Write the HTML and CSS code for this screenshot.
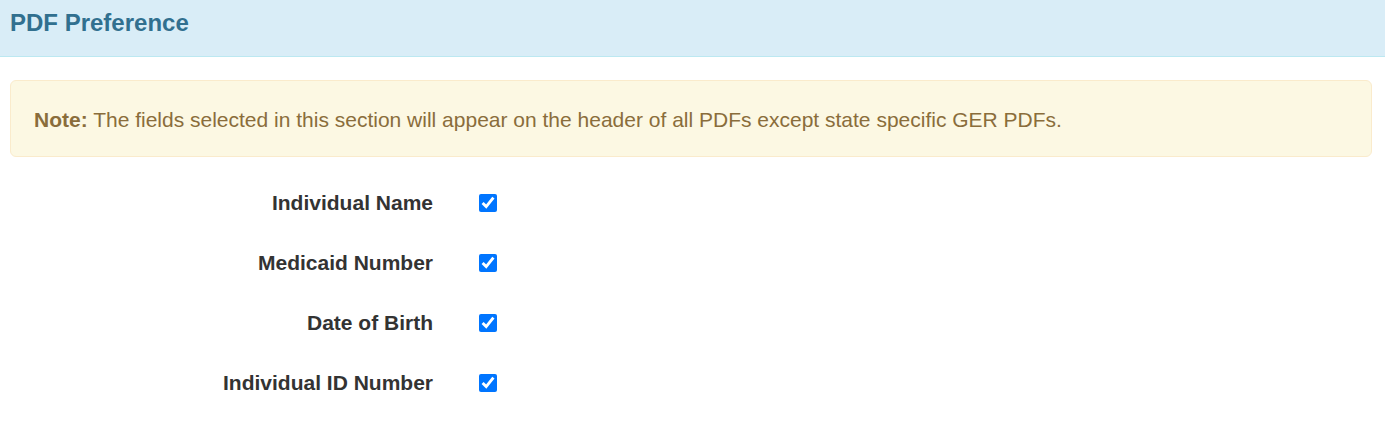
FILE: index.html
```html
<!DOCTYPE html>
<html lang="en">
<head>
<meta charset="utf-8">
<title>PDF Preference</title>
<link rel="stylesheet" href="styles.css">
</head>
<body>
<div class="panel">
  <div class="panel-heading">
    <h3 class="panel-title">PDF Preference</h3>
  </div>
  <div class="panel-body">
    <div class="alert"><strong>Note:</strong> The fields selected in this section will appear on the header of all PDFs except state specific GER PDFs.</div>
    <form class="fields">
      <label class="field-label" for="f1">Individual Name</label>
      <div class="field-input"><input id="f1" type="checkbox" checked></div>
      <label class="field-label" for="f2">Medicaid Number</label>
      <div class="field-input"><input id="f2" type="checkbox" checked></div>
      <label class="field-label" for="f3">Date of Birth</label>
      <div class="field-input"><input id="f3" type="checkbox" checked></div>
      <label class="field-label" for="f4">Individual ID Number</label>
      <div class="field-input"><input id="f4" type="checkbox" checked></div>
    </form>
  </div>
</div>
</body>
</html>
```
FILE: styles.css
```css
html, body {
  margin: 0;
  padding: 0;
  background: #ffffff;
}
body {
  font-family: "Liberation Sans", Arial, Helvetica, sans-serif;
  font-size: 21px;
  line-height: 30px;
  color: #333333;
}
.panel-heading {
  box-sizing: border-box;
  height: 57px;
  padding: 10px 10px 0;
  background: #d9edf7;
  border-bottom: 1px solid #bce8f1;
}
.panel-title {
  margin: 0;
  font-size: 24px;
  line-height: 26.4px;
  font-weight: bold;
  color: #31708f;
}
.panel-body {
  padding: 23px 13px 0 10px;
}
.alert {
  box-sizing: border-box;
  height: 77px;
  padding: 23.5px 23px 21.5px;
  background: #fcf8e3;
  border: 1px solid #faebcc;
  border-radius: 6px;
  color: #8a6d3b;
  white-space: nowrap;
}
.alert strong {
  font-weight: bold;
}
.fields {
  margin: 16px 0 0 -10px;
  display: grid;
  grid-template-columns: 433px 18px;
  grid-auto-rows: 60px;
  column-gap: 46px;
  align-items: center;
}
.field-label {
  text-align: right;
  font-weight: bold;
  color: #333333;
  white-space: nowrap;
}
.field-input {
  display: flex;
  align-items: center;
  height: 18px;
}
.field-input input {
  width: 18px;
  height: 18px;
  margin: 0;
}
```
